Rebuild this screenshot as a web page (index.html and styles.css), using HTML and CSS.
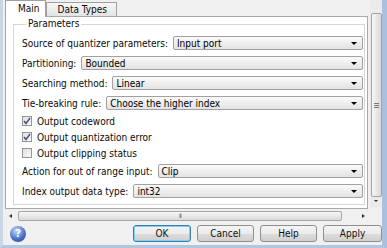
FILE: index.html
```html
<!DOCTYPE html>
<html>
<head>
<meta charset="utf-8">
<link rel="stylesheet" href="styles.css">
</head>
<body>
<div class="win">
  <div class="top">
    <div class="left">
      <div class="tabs">
        <div class="tab active">Main</div>
        <div class="tab">Data Types</div>
      </div>
      <div class="panel">
        <fieldset class="group">
          <legend>Parameters</legend>
          <div class="row">
            <span class="lbl">Source of quantizer parameters:</span>
            <div class="sel"><span>Input port</span><i class="arr"></i></div>
          </div>
          <div class="row">
            <span class="lbl">Partitioning:</span>
            <div class="sel"><span>Bounded</span><i class="arr"></i></div>
          </div>
          <div class="row">
            <span class="lbl">Searching method:</span>
            <div class="sel"><span>Linear</span><i class="arr"></i></div>
          </div>
          <div class="row">
            <span class="lbl">Tie-breaking rule:</span>
            <div class="sel"><span>Choose the higher index</span><i class="arr"></i></div>
          </div>
          <div class="cbrow">
            <span class="cb"><svg width="8" height="8" viewBox="0 0 8 8"><polyline points="1,4 3,6.5 7,1" fill="none" stroke="#3f4f75" stroke-width="1.4"/></svg></span>
            <span>Output codeword</span>
          </div>
          <div class="cbrow">
            <span class="cb"><svg width="8" height="8" viewBox="0 0 8 8"><polyline points="1,4 3,6.5 7,1" fill="none" stroke="#3f4f75" stroke-width="1.4"/></svg></span>
            <span>Output quantization error</span>
          </div>
          <div class="cbrow">
            <span class="cb"></span>
            <span>Output clipping status</span>
          </div>
          <div class="row">
            <span class="lbl">Action for out of range input:</span>
            <div class="sel"><span>Clip</span><i class="arr"></i></div>
          </div>
          <div class="row">
            <span class="lbl">Index output data type:</span>
            <div class="sel"><span>int32</span><i class="arr"></i></div>
          </div>
        </fieldset>
      </div>
      <div class="hscroll">
        <span class="larr"></span>
        <div class="hthumb"><span class="hgrip">III</span></div>
        <span class="rarr"></span>
      </div>
    </div>
    <div class="vcol">
      <div class="vscroll">
        <div class="vthumb"><span class="vgrip"></span></div>
        <span class="darr"></span>
      </div>
      <div class="corner"></div>
    </div>
  </div>
  <div class="buttons">
    <span class="help">?</span>
    <div class="btns">
      <div class="btn ok">OK</div>
      <div class="btn">Cancel</div>
      <div class="btn">Help</div>
      <div class="btn apply">Apply</div>
    </div>
  </div>
</div>
</body>
</html>
```
FILE: styles.css
```css
html, body {
  margin: 0;
  padding: 0;
}
body {
  width: 387px;
  height: 248px;
  overflow: hidden;
  background: #f0f0f0;
  font-family: "DejaVu Sans", Verdana, sans-serif;
  font-size: 10px;
  font-stretch: semi-condensed;
  color: #0a0a0a;
}
.win {
  box-sizing: border-box;
  height: 248px;
  display: flex;
  flex-direction: column;
  border-left: 3px solid #c9d6e6;
  border-right: 5px solid #a9c0de;
  border-bottom: 3px solid #b3c6df;
}
.top {
  display: flex;
  flex: 0 0 222px;
}
.left {
  flex: 1;
  display: flex;
  flex-direction: column;
  padding-left: 2px;
  min-width: 0;
}
.tabs {
  display: flex;
  align-items: flex-end;
  height: 16px;
  position: relative;
  z-index: 1;
}
.tab {
  box-sizing: border-box;
  height: 14px;
  padding: 0 9px 0 10px;
  border: 1px solid #a0a0a0;
  border-bottom: none;
  background: linear-gradient(#f7f7f7, #e3e3e3);
  line-height: 13px;
}
.tab.active {
  height: 17px;
  margin-bottom: -1px;
  background: #fff;
  padding: 0 6px 0 12px;
  line-height: 15px;
}
.panel {
  flex: 1;
  background: #fff;
  border: 1px solid #a9a9a9;
  display: flex;
  flex-direction: column;
}
.group {
  margin: 1px 2px 0 7px;
  padding: 3px 1px 3px 8px;
  border: 1px solid #d6d6d6;
  min-width: 0;
}
.group legend {
  padding: 0 2px;
  margin-left: 4px;
  line-height: 12px;
}
.row {
  display: flex;
  align-items: center;
  height: 20px;
  gap: 5px;
}
.lbl {
  white-space: nowrap;
}
.sel {
  flex: 1;
  height: 14px;
  box-sizing: border-box;
  border: 1px solid #a2a2a2;
  border-radius: 2px;
  background: linear-gradient(#fbfbfb, #e2e2e2);
  display: flex;
  align-items: center;
  padding-left: 3px;
  color: #000;
}
.sel span {
  flex: 1;
}
.arr {
  width: 0;
  height: 0;
  border-left: 3px solid transparent;
  border-right: 3px solid transparent;
  border-top: 3px solid #000;
  margin-right: 5px;
}
.cbrow {
  display: flex;
  align-items: center;
  height: 16px;
  gap: 5px;
}
.cb {
  box-sizing: border-box;
  width: 10px;
  height: 10px;
  border: 1px solid #959595;
  background: linear-gradient(135deg, #dedede, #fafafa);
  display: flex;
  align-items: center;
  justify-content: center;
}
.hscroll {
  height: 12px;
  margin-top: 1px;
  display: flex;
  align-items: center;
  padding: 0 3px 0 4px;
  gap: 6px;
}
.larr {
  width: 0;
  height: 0;
  border-top: 2px solid transparent;
  border-bottom: 2px solid transparent;
  border-right: 3px solid #333;
}
.rarr {
  width: 0;
  height: 0;
  border-top: 2px solid transparent;
  border-bottom: 2px solid transparent;
  border-left: 3px solid #333;
  margin-left: 14px;
}
.hthumb {
  flex: 1;
  height: 10px;
  box-sizing: border-box;
  border: 1px solid #a5a5a5;
  border-radius: 2px;
  background: linear-gradient(#f6f6f6, #dadada);
  display: flex;
  align-items: center;
  justify-content: center;
}
.hgrip {
  font-size: 6px;
  letter-spacing: -1px;
  color: #666;
  line-height: 6px;
}
.vcol {
  width: 12px;
  margin-left: 2px;
  display: flex;
  flex-direction: column;
}
.vscroll {
  flex: 1;
  background: #ebebeb;
  display: flex;
  flex-direction: column;
  align-items: center;
  padding-top: 13px;
}
.vthumb {
  box-sizing: border-box;
  width: 11px;
  height: 184px;
  border: 1px solid #a3a3a3;
  border-radius: 2px;
  background: linear-gradient(90deg, #f7f7f7, #d9d9d9);
  display: flex;
  align-items: center;
  justify-content: center;
}
.vgrip {
  width: 5px;
  height: 5px;
  background: repeating-linear-gradient(#777 0 1px, transparent 1px 2px);
}
.darr {
  margin-top: 3px;
  width: 0;
  height: 0;
  border-left: 2px solid transparent;
  border-right: 2px solid transparent;
  border-top: 2px solid #333;
}
.corner {
  height: 14px;
}
.buttons {
  flex: 1;
  display: flex;
  align-items: center;
  padding: 0 0 0 7px;
}
.help {
  width: 16px;
  height: 16px;
  border-radius: 50%;
  background: radial-gradient(circle at 40% 30%, #c5d8f7, #4c73c8 55%, #233f8f);
  color: #fff;
  font-weight: bold;
  font-size: 11px;
  display: flex;
  align-items: center;
  justify-content: center;
  line-height: 1;
}
.btns {
  margin-left: auto;
  display: flex;
  gap: 6px;
}
.btn {
  box-sizing: border-box;
  width: 57px;
  height: 17px;
  border: 1px solid #8e8f8f;
  border-radius: 3px;
  background: linear-gradient(#f4f4f4 0%, #ebebeb 50%, #dcdcdc 51%, #d0d0d0 100%);
  display: flex;
  align-items: center;
  justify-content: center;
  color: #111;
}
.btn.ok {
  width: 58px;
  border-color: #3d7bad;
  box-shadow: inset 0 0 0 1px #7fd1f5;
}
.btn.apply {
  width: 59px;
}
```
